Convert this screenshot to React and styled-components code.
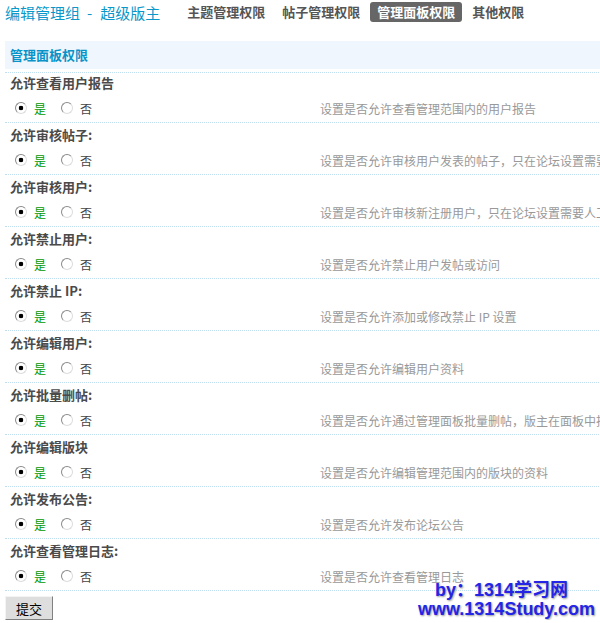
import React from "react";
import styled, { createGlobalStyle } from "styled-components";

const GlobalStyle = createGlobalStyle`
  html, body {
    margin: 0;
    padding: 0;
    background: #fff;
    overflow: hidden;
  }
  body {
    font-family: "Noto Sans CJK SC", "Liberation Sans", sans-serif;
    font-size: 12px;
    color: #444;
  }
`;

const Page = styled.div`
  position: relative;
  width: 790px;
  padding: 0 5px;
  box-sizing: border-box;
`;

const Header = styled.div`
  display: flex;
  align-items: center;
  height: 24px;
`;

const Title = styled.h1`
  display: flex;
  align-items: center;
  margin: 0 20px 0 0;
  font-size: 15px;
  font-weight: normal;
  color: #0a97c9;
  white-space: nowrap;
`;

const Dash = styled.span`
  margin: 0 8px 0 7px;
`;

const Tab = styled.a`
  display: inline-block;
  height: 20px;
  line-height: 20px;
  padding: 0 7px;
  margin-right: 3px;
  border-radius: 3px;
  font-size: 13px;
  font-weight: bold;
  color: ${(p) => (p.$active ? "#fff" : "#555")};
  background: ${(p) => (p.$active ? "#666" : "transparent")};
  text-decoration: none;
  white-space: nowrap;
`;

const Section = styled.div`
  margin-top: 17px;
`;

const BandWrap = styled.div`
  padding-bottom: 3px;
  border-bottom: 1px dotted #bfe0f3;
`;

const Band = styled.h2`
  margin: 0;
  height: 28px;
  line-height: 28px;
  padding-left: 5px;
  background: #f0f6fd;
  font-size: 13px;
  font-weight: bold;
  color: #0a93c8;
`;

const List = styled.div``;

const Row = styled.div`
  padding: 3px 0 0 5px;
  border-bottom: 1px dotted #bfe0f3;

  &:first-child {
    padding-top: 1px;
  }
`;

const Label = styled.div`
  height: 20px;
  line-height: 17px;
  font-size: 13px;
  font-weight: bold;
  color: #4a4a4a;
  white-space: nowrap;
`;

const Options = styled.div`
  display: grid;
  grid-template-columns: 310px 1fr;
  align-items: center;
  height: 28px;
`;

const Choices = styled.div`
  display: flex;
  align-items: center;
  font-size: 12px;
`;

const Radio = styled.input.attrs({ type: "radio" })`
  appearance: none;
  width: 12px;
  height: 12px;
  margin: 0 7px 0 ${(p) => (p.$first ? 5 : 15)}px;
  border-radius: 50%;
  border: 1px solid;
  border-color: #8a8a8a #dcdcdc #dcdcdc #8a8a8a;
  box-sizing: border-box;
  background: #fff;

  &:checked {
    background: radial-gradient(circle, #000 0 2px, #fff 2.6px);
  }
`;

const Choice = styled.span`
  color: ${(p) => (p.$yes ? "#009900" : "#444")};
`;

const Desc = styled.div`
  font-size: 12px;
  color: #999;
  white-space: nowrap;
`;

const Submit = styled.button`
  margin-top: 5px;
  width: 48px;
  height: 24px;
  padding: 0;
  font-family: inherit;
  font-size: 13px;
  color: #000;
  background: #dedede;
  border: 1px solid;
  border-color: #f4f4f4 #808080 #808080 #f4f4f4;
`;

const Watermark = styled.div`
  position: absolute;
  left: 418px;
  top: 581px;
  font-family: "Liberation Sans", "Noto Sans CJK SC", sans-serif;
  font-weight: bold;
  font-size: 18px;
  line-height: 19px;
  color: #2424e6;
  text-shadow: 1px 1px 2px #9a9a9a;
  white-space: nowrap;
  pointer-events: none;
`;

const WatermarkLine = styled.div`
  padding-left: ${(p) => p.$indent || 0}px;
`;

const tabs = [
  { name: "主题管理权限" },
  { name: "帖子管理权限" },
  { name: "管理面板权限", active: true },
  { name: "其他权限" },
];

const perms = [
  ["允许查看用户报告", "设置是否允许查看管理范围内的用户报告"],
  ["允许审核帖子:", "设置是否允许审核用户发表的帖子，只在论坛设置需要审核时有效"],
  ["允许审核用户:", "设置是否允许审核新注册用户，只在论坛设置需要人工审核新用户时有效"],
  ["允许禁止用户:", "设置是否允许禁止用户发帖或访问"],
  ["允许禁止 IP:", "设置是否允许添加或修改禁止 IP 设置"],
  ["允许编辑用户:", "设置是否允许编辑用户资料"],
  ["允许批量删帖:", "设置是否允许通过管理面板批量删帖，版主在面板中批量删帖的范围为其管理的版块"],
  ["允许编辑版块", "设置是否允许编辑管理范围内的版块的资料"],
  ["允许发布公告:", "设置是否允许发布论坛公告"],
  ["允许查看管理日志:", "设置是否允许查看管理日志"],
];

const App = () => {
  return (
    <Page>
      <GlobalStyle />
      <Header>
        <Title>
          编辑管理组<Dash>-</Dash>超级版主
        </Title>
        {tabs.map((t) => (
          <Tab key={t.name} href="#" $active={t.active}>
            {t.name}
          </Tab>
        ))}
      </Header>

      <Section>
        <BandWrap>
          <Band>管理面板权限</Band>
        </BandWrap>
        <List>
          {perms.map(([label, desc], i) => (
            <Row key={label}>
              <Label>{label}</Label>
              <Options>
                <Choices>
                  <Radio $first name={"p" + i} defaultChecked />
                  <Choice $yes>是</Choice>
                  <Radio name={"p" + i} />
                  <Choice>否</Choice>
                </Choices>
                <Desc>{desc}</Desc>
              </Options>
            </Row>
          ))}
        </List>
      </Section>

      <Submit>提交</Submit>

      <Watermark>
        <WatermarkLine $indent={17}>by：1314学习网</WatermarkLine>
        <WatermarkLine>www.1314Study.com</WatermarkLine>
      </Watermark>
    </Page>
  );
};

export default App;
